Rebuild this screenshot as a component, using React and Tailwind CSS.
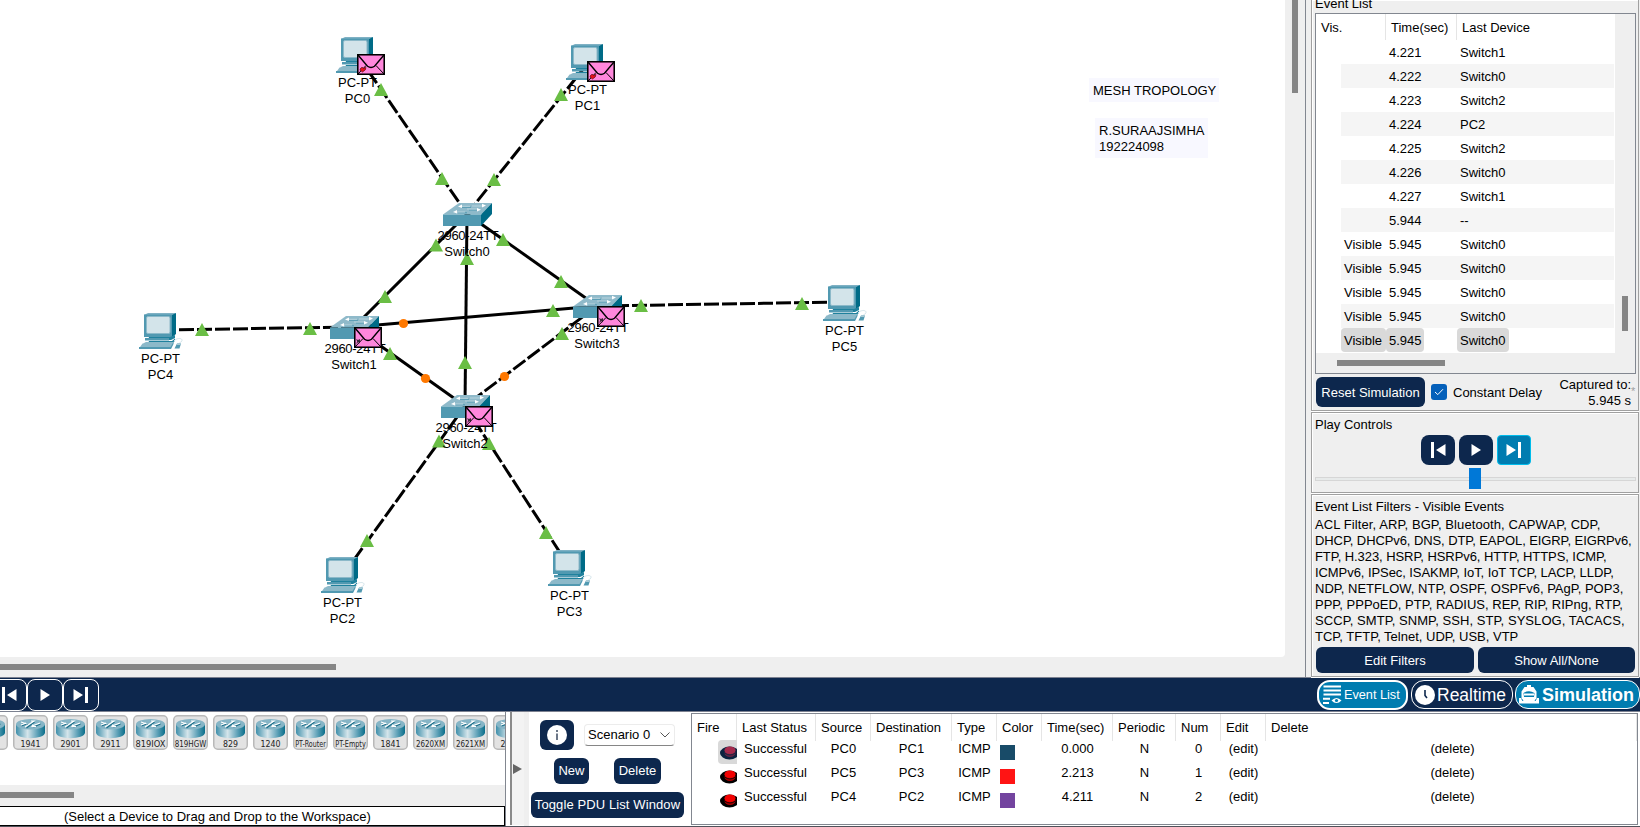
import React from "react";

const PCS = [
  { name: "PC0", x: 336, y: 37 },
  { name: "PC1", x: 566, y: 44 },
  { name: "PC4", x: 139, y: 313 },
  { name: "PC5", x: 823, y: 285 },
  { name: "PC2", x: 321, y: 557 },
  { name: "PC3", x: 548, y: 550 },
];

const SWITCHES = [
  { name: "Switch0", x: 443, y: 203 },
  { name: "Switch1", x: 330, y: 316 },
  { name: "Switch3", x: 573, y: 295 },
  { name: "Switch2", x: 441, y: 395 },
];

const LINKS = [
  [358, 56, 467, 214, true],
  [588, 63, 467, 214, true],
  [161, 330, 354, 327, true],
  [845, 302, 597, 306, true],
  [343, 575, 465, 406, true],
  [570, 568, 465, 406, true],
  [597, 306, 465, 406, true],
  [467, 214, 354, 327, false],
  [467, 214, 597, 306, false],
  [467, 214, 465, 406, false],
  [354, 327, 597, 306, false],
  [354, 327, 465, 406, false],
];

const UP = [
  [381, 89.5], [442, 178.5], [561, 94.5], [494, 179.5], [436, 245], [467, 258.5], [503, 239.5],
  [385, 296.5], [561, 281.5], [553, 310.5], [562, 333.5], [202, 329.5], [310, 328.5], [390, 353.5],
  [465, 362.5], [439, 441], [489, 443.5], [367, 540.5], [546, 532.5], [641, 305.5], [802, 303.5],
];

const WAIT = [[403.5, 323.5], [425.5, 378.5], [504.5, 376.5]];

const MAILS = [
  [357, 54, true], [587, 61, true], [354, 327, false], [597, 306, false], [465, 406, false],
];

function PcIcon() {
  return (
    <svg width="46" height="37" viewBox="0 0 46 37">
      <path d="M5 2 L9 0 H37 L34 3 Z" fill="#7fb1c4" />
      <path d="M33 2 L37 0 V21 L32 25 Z" fill="#006b87" />
      <rect x="5" y="1.5" width="28" height="22.5" fill="#5199b1" />
      <rect x="7.5" y="3.5" width="23.5" height="17" rx="1.5" fill="#d3e4ea" stroke="#8cb9c9" strokeWidth="1" />
      <path d="M10 24 H31 L36 22 V25 L32 27 H9 Z" fill="#1f819d" />
      <path d="M6 25 H30 V27.5 H6 Z" fill="#5199b1" />
      <path d="M10 28 H33 L36 25.5 V28 L32 30.5 H9 Z" fill="#1f819d" />
      <path d="M4 30.5 L7 29 H35 L32 35.5 H0 L3.5 30.5 Z" fill="#8cb9c9" />
      <path d="M0 34 H31.5 L34.5 29 V31 L32 36 H0 Z" fill="#5199b1" />
      <path d="M35 28 C38 24.5 43.5 25 43 27.5 C42.5 30 40 29 40 31" fill="none" stroke="#d3e4ea" strokeWidth="1" />
      <path d="M35.5 35.5 L38 30.5 H42 L40.5 35.5 Z" fill="#5199b1" />
      <path d="M37.5 32 L38.5 30.5 H42 L41.5 32 Z" fill="#a9cad6" />
    </svg>
  );
}

function SwitchIcon() {
  return (
    <svg width="50" height="24" viewBox="0 0 50 24">
      <path d="M0 11.5 L16 0 H49 L38 11.5 Z" fill="#8fbaca" />
      <path d="M38 11.5 L49 0 V11 L38 23 Z" fill="#006b87" />
      <rect x="0" y="11.5" width="38" height="11.5" fill="#5199b1" />
      <g fill="none" strokeWidth="1">
        <path d="M18 4.3 H28 M26 7 H36 M15 9.8 H24" stroke="#5199b1" />
        <path d="M17 3.3 H27 M29 3 H41 M24 6 H34 M12 9 H22" stroke="#b9d4de" />
      </g>
      <path d="M15 3.5 L19 1.5 V5 Z M43 2.5 L39 0.8 V4.4 Z M38 6.8 L34 5 V8.4 Z M10 9 L14 7 V10.5 Z" fill="#fff" />
    </svg>
  );
}

function Mail({ failed }) {
  return (
    <svg width="28" height="21" viewBox="0 0 28 21">
      <rect x="0.75" y="0.75" width="26.5" height="19.5" fill="#ff87dc" stroke="#000" strokeWidth="1.6" />
      <path d="M1 1 L10.5 12.2 Q14 14.8 17.5 12.2 L27 1" fill="none" stroke="#000" strokeWidth="1.4" />
      <path d="M1 20 L9 11.5 M27 20 L19 11.5" fill="none" stroke="#000" strokeWidth="1" />
      {failed ? (
        <path d="M3 15 L5 13.2 L6.5 14.2 L9 13.5 L8.2 16 L5.5 18 L3.5 16.5 Z" fill="#e8101c" stroke="#400" strokeWidth="0.6" />
      ) : (
        <path d="M2 12 L4 13 L6 12 V16.5 L4.5 15 L2 17 L3.2 14.5 Z" fill="#1a1a1a" opacity="0.85" />
      )}
    </svg>
  );
}

function Workspace() {
  return (
    <div className="relative h-[657px] w-[1285px] overflow-hidden rounded-br-sm bg-white">
      <svg className="absolute inset-0" width="1285" height="657">
        {LINKS.map(([x1, y1, x2, y2, dashed], i) => (
          <line key={i} x1={x1} y1={y1} x2={x2} y2={y2} stroke="#000" strokeWidth="3" strokeDasharray={dashed ? "15 3" : undefined} />
        ))}
        {UP.map(([x, y], i) => (
          <path key={i} d={`M${x} ${y - 6.5} L${x + 7} ${y + 6.5} H${x - 7} Z`} fill="#6abe45" />
        ))}
        {WAIT.map(([x, y], i) => (
          <circle key={i} cx={x} cy={y} r="4.6" fill="#ff7800" />
        ))}
      </svg>
      {PCS.map((d) => (
        <div key={d.name} className="absolute" style={{ left: d.x, top: d.y }}>
          <PcIcon />
          <div className="mt-px w-[43px] text-center">PC-PT<br />{d.name}</div>
        </div>
      ))}
      {SWITCHES.map((d) => (
        <div key={d.name} className="absolute" style={{ left: d.x, top: d.y }}>
          <SwitchIcon />
          <div className="-ml-2 mt-px w-[66px] text-center"><span className="tracking-[-0.3px]">2960-24TT</span></div>
          <div className="-ml-2 w-[64px] text-center">{d.name}</div>
        </div>
      ))}
      {MAILS.map(([x, y, failed], i) => (
        <div key={i} className="absolute" style={{ left: x, top: y }}>
          <Mail failed={failed} />
        </div>
      ))}
      <div className="absolute left-[1089px] top-[78px] h-6 w-[130px] whitespace-nowrap bg-[#f8f8ff] pl-1 pt-[5px]">MESH TROPOLOGY</div>
      <div className="absolute left-[1095px] top-[118px] h-10 w-[113px] bg-[#f8f8ff] pl-1 pt-[5px]">R.SURAAJSIMHA<br />192224098</div>
    </div>
  );
}

const EVENTS = [
  ["", "4.221", "Switch1"], ["", "4.222", "Switch0"], ["", "4.223", "Switch2"], ["", "4.224", "PC2"],
  ["", "4.225", "Switch2"], ["", "4.226", "Switch0"], ["", "4.227", "Switch1"], ["", "5.944", "--"],
  ["Visible", "5.945", "Switch0"], ["Visible", "5.945", "Switch0"], ["Visible", "5.945", "Switch0"],
  ["Visible", "5.945", "Switch0"], ["Visible", "5.945", "Switch0"],
];

function EventRow({ row, index }) {
  const selected = index === EVENTS.length - 1;
  const chip = selected ? "bg-[#d9d9d9]" : "";
  return (
    <div className={`ml-[25px] flex h-6 w-[273px] leading-[26px] ${index % 2 ? "bg-[#f5f5f5]" : "bg-white"}`}>
      <div className="w-[45px]"><div className={`h-6 rounded-sm pl-[3px] ${chip}`}>{row[0]}</div></div>
      <div className="w-[71px]"><div className={`h-6 w-[38px] rounded-sm pl-[3px] ${chip}`}>{row[1]}</div></div>
      <div className={`h-6 w-[52px] rounded-sm pl-[3px] ${chip}`}>{row[2]}</div>
    </div>
  );
}

const group = "border border-[#a0a0a0] shadow-[inset_1px_1px_0_#fff,0_1px_0_#fff]";

function StepGlyph({ kind }) {
  return (
    <svg width="20" height="20" viewBox="0 0 20 20" fill="#fff">
      {kind === "back" && <path d="M3 2 H6 V18 H3 Z M17.5 4 V16 L8 10 Z" />}
      {kind === "play" && <path d="M5.5 4 V16 L15 10 Z" />}
      {kind === "next" && <path d="M14 2 H17 V18 H14 Z M2.5 4 V16 L12 10 Z" />}
    </svg>
  );
}

function SidePanel() {
  return (
    <aside className="flex h-[677px] w-[335px] flex-col border-l border-[#828790] pl-[5px]">
      <section className={`h-[411px] w-[328px] overflow-hidden border-t-0 pl-[3px] ${group}`}>
        <div className="-mt-1 h-4">Event List</div>
        <div className="mt-px h-[361px] w-[321px] border border-[#828790]">
          <div className="flex">
            <div className="h-[339px] w-[299px] bg-white">
              <div className="flex h-[26px] leading-[28px]">
                <div className="w-[70px] border-r border-[#e5e5e5] pl-[5px]">Vis.</div>
                <div className="w-[71px] border-r border-[#e5e5e5] pl-[5px]">Time(sec)</div>
                <div className="pl-[5px]">Last Device</div>
              </div>
              {EVENTS.map((row, i) => <EventRow key={i} row={row} index={i} />)}
            </div>
            <div className="w-5 pl-[7px] pt-[282px]"><div className="h-[35px] w-1.5 bg-[#868686]" /></div>
          </div>
          <div className="pl-[21px] pt-[7px]"><div className="h-1.5 w-[108px] bg-[#868686]" /></div>
        </div>
        <div className="flex h-9 items-start pt-[3px]">
          <button className="ml-px h-[30px] w-[109px] rounded-md bg-[#0d274d] pt-px text-white">Reset Simulation</button>
          <div className="ml-1.5 mt-[7px] flex h-4 w-4 items-center justify-center rounded-[3px] bg-[#0560ba]">
            <svg width="10" height="8" viewBox="0 0 10 8"><path d="M1 4 L3.8 6.6 L9 1.2" fill="none" stroke="#fff" strokeWidth="1" /></svg>
          </div>
          <div className="ml-1.5 mt-2 w-24">Constant Delay</div>
          <div className="w-[82px] text-right">Captured to:<br />5.945 s</div>
          <div className="mt-1.5 text-[11px] text-[#a0a0a0]">*</div>
        </div>
      </section>

      <section className={`mt-px h-[81px] w-[328px] pl-[3px] ${group}`}>
        <div className="mt-1 h-4">Play Controls</div>
        <div className="ml-[106px] mt-0.5 flex gap-1">
          <button className="flex h-[30px] w-[34px] items-center justify-center rounded-lg bg-[#0d274d]"><StepGlyph kind="back" /></button>
          <button className="flex h-[30px] w-[34px] items-center justify-center rounded-lg bg-[#0d274d]"><StepGlyph kind="play" /></button>
          <button className="flex h-[30px] w-[34px] items-center justify-center rounded-sm border border-[#00bceb] bg-[#007cb0]"><StepGlyph kind="next" /></button>
        </div>
        <div className="mt-[3px] flex h-[21px] w-[321px] items-center">
          <div className="h-1 w-[154px] border border-r-0 border-[#d6d6d6] bg-[#e7eaea]" />
          <div className="h-[21px] w-3 bg-[#0078d7]" />
          <div className="h-1 flex-1 border border-l-0 border-[#d6d6d6] bg-[#e7eaea]" />
        </div>
      </section>

      <section className={`mt-px h-[183px] w-[328px] pl-[3px] ${group}`}>
        <div className="mt-1 h-4">Event List Filters - Visible Events</div>
        <div className="mt-0.5 whitespace-nowrap">
          <div className="tracking-[0.09px]">ACL Filter, ARP, BGP, Bluetooth, CAPWAP, CDP,</div>
          <div className="tracking-[-0.09px]">DHCP, DHCPv6, DNS, DTP, EAPOL, EIGRP, EIGRPv6,</div>
          <div className="tracking-[-0.07px]">FTP, H.323, HSRP, HSRPv6, HTTP, HTTPS, ICMP,</div>
          <div className="tracking-[-0.07px]">ICMPv6, IPSec, ISAKMP, IoT, IoT TCP, LACP, LLDP,</div>
          <div>NDP, NETFLOW, NTP, OSPF, OSPFv6, PAgP, POP3,</div>
          <div>PPP, PPPoED, PTP, RADIUS, REP, RIP, RIPng, RTP,</div>
          <div className="tracking-[0.06px]">SCCP, SMTP, SNMP, SSH, STP, SYSLOG, TACACS,</div>
          <div>TCP, TFTP, Telnet, UDP, USB, VTP</div>
        </div>
        <div className="ml-px mt-0.5 flex gap-1">
          <button className="h-[26px] w-[158px] rounded-md bg-[#0d274d] pt-px text-white">Edit Filters</button>
          <button className="h-[26px] w-[157px] rounded-md bg-[#0d274d] pt-px text-white">Show All/None</button>
        </div>
      </section>
    </aside>
  );
}

function ModeBar() {
  const step = "flex h-8 w-9 items-center justify-center rounded-lg border border-white";
  return (
    <div className="flex h-[35px] items-center overflow-hidden border-y border-[#7c8190] bg-[#0d274d] text-white">
      <div className="-ml-[9px] flex flex-1">
        <button className={step}><StepGlyph kind="back" /></button>
        <button className={step}><StepGlyph kind="play" /></button>
        <button className={step}><StepGlyph kind="next" /></button>
      </div>
      <button className="flex h-[30px] w-[91px] items-center rounded-[13px] border-2 border-white bg-[#007cb0] pl-[3px] text-[12.7px]">
        <svg width="21" height="20" viewBox="0 0 21 20" fill="none" stroke="#fff" strokeWidth="2">
          <path d="M1.5 1.5 H19 M1.5 5.5 H19 M1.5 9.5 H19 M1 13.8 H8 M1 18 H7" />
          <path d="M9.5 15.5 Q14.5 10.5 19.5 15.5 Q14.5 20.5 9.5 15.5 Z" fill="#fff" stroke="none" />
          <circle cx="14.5" cy="15.5" r="1.6" fill="#007cb0" stroke="none" />
        </svg>
        <span className="ml-px whitespace-nowrap">Event List</span>
      </button>
      <button className="ml-[3px] flex h-[29px] w-[102px] items-center rounded-[13px] border border-white pl-[3px] text-[17.5px]">
        <svg width="20" height="20" viewBox="0 0 20 20">
          <circle cx="10" cy="10" r="10" fill="#fff" />
          <path d="M10 5 V10.5 L12 13" fill="none" stroke="#0d274d" strokeWidth="1.6" />
        </svg>
        <span className="ml-0.5">Realtime</span>
      </button>
      <button className="ml-0.5 flex h-[29px] w-[125px] items-center rounded-[13px] border border-white bg-[#007cb0] pl-[3px] text-[18px] font-bold">
        <svg width="20" height="20" viewBox="0 0 20 20" fill="#fff">
          <path d="M8 0 H12 V2 H14.5 L17.5 6.5 V13 H20 V18.5 H0 V13 H2.5 V6.5 L5.5 2 H8 Z" />
          <path d="M4.5 8 Q10 4.5 15.5 8 L15 12 H5 Z" fill="#007cb0" />
          <path d="M2.5 13.5 L4 16 M17.5 13.5 L16 16" stroke="#007cb0" strokeWidth="1" />
          <rect x="5" y="8.5" width="10" height="2" />
        </svg>
        <span className="ml-[3px]">Simulation</span>
      </button>
    </div>
  );
}

const ROUTERS = [
  ["", 10], ["1941", 20], ["2901", 20], ["2911", 20], ["819IOX", 30], ["819HGW", 31.5], ["829", 15], ["1240", 20],
  ["PT-Router", 30.5], ["PT-Empty", 30.5], ["1841", 20], ["2620XM", 29], ["2621XM", 29], ["2811", 20],
];

function RouterTile({ label, width }) {
  return (
    <svg className="shrink-0 overflow-visible" width="35" height="35" viewBox="0 0 35 35">
      <rect x="0.75" y="0.75" width="33.5" height="33.5" rx="4" fill="#e3e3e3" stroke="#b9b9b9" strokeWidth="1.5" />
      <path d="M3 9 V17.5 C3 25 32 25 32 17.5 V9 Z" fill="url(#cylinder)" />
      <ellipse cx="17.5" cy="9.3" rx="14.5" ry="5.3" fill="#86b5c6" />
      <g fill="none" stroke="#1c6f89" strokeWidth="1.2" transform="translate(0.5 1)">
        <path d="M9 7 L15 9 M13 12 L21 6 M20 11 L27 8 M8 10 L13 8" />
      </g>
      <g fill="none" stroke="#fff" strokeWidth="1.1">
        <path d="M8 7 L14 9 M12 12 L21 6 H18 M19 11 L27 8 M8 10 L13 8 M20 9.5 L19 11.5 H23" />
      </g>
      <text x="17.5" y="31.7" textAnchor="middle" fontFamily="DejaVu Sans, sans-serif" fontSize="8" textLength={width} lengthAdjust="spacingAndGlyphs" fill="#222">{label}</text>
    </svg>
  );
}

function DevicePanel() {
  return (
    <div className="flex h-[114px] w-[506px] flex-col border-r border-[#828790]">
      <svg width="0" height="0" className="absolute">
        <defs>
          <linearGradient id="cylinder">
            <stop offset="0" stopColor="#3f8faa" />
            <stop offset="0.4" stopColor="#d5e5eb" />
            <stop offset="0.75" stopColor="#5a9fb6" />
            <stop offset="1" stopColor="#0a6e8a" />
          </linearGradient>
        </defs>
      </svg>
      <div className="flex h-[73px] overflow-hidden bg-white pt-[3px]">
        <div className="-ml-[27px] flex gap-[5px]">
          {ROUTERS.map(([label, w], i) => <RouterTile key={i} label={label} width={w} />)}
        </div>
      </div>
      <div className="h-[21px] bg-[#efefef] pt-[7px]"><div className="h-1.5 w-[74px] bg-[#868686]" /></div>
      <div className="h-5 border-y border-r border-black bg-white pl-16 pt-0.5">(Select a Device to Drag and Drop to the Workspace)</div>
    </div>
  );
}

function ScenarioPanel() {
  const button = "h-[26px] rounded-md bg-[#0d274d] text-white";
  return (
    <div className="flex h-[113px] w-[162px] flex-col bg-white pl-0.5">
      <div className="flex pt-2">
        <button className="ml-[9px] flex h-[30px] w-[34px] items-center justify-center rounded-md bg-[#0d274d]">
          <svg width="20" height="20" viewBox="0 0 20 20">
            <circle cx="10" cy="10" r="10" fill="#fff" />
            <rect x="9" y="8.5" width="2" height="6.5" fill="#6b7687" />
            <rect x="9" y="5" width="2" height="2" fill="#6b7687" />
          </svg>
        </button>
        <div className="ml-2.5 mt-1 flex h-[22px] w-[91px] items-center rounded-sm border border-b-[#868686] border-[#ececec] pl-[3px]">
          Scenario 0
          <svg className="ml-2.5" width="10" height="6" viewBox="0 0 10 6"><path d="M0.5 0.5 L5 5 L9.5 0.5" fill="none" stroke="#555" /></svg>
        </div>
      </div>
      <div className="mt-2 flex">
        <button className={`ml-[23px] w-[35px] ${button}`}>New</button>
        <button className={`ml-[25px] w-[47px] ${button}`}>Delete</button>
      </div>
      <button className={`mt-2 w-[153px] whitespace-nowrap tracking-[0.1px] ${button}`}>Toggle PDU List Window</button>
    </div>
  );
}

const PDUS = [
  ["PC0", "PC1", "bg-[#184b68]", "0.000", "0"],
  ["PC5", "PC3", "bg-[#ff1414]", "2.213", "1"],
  ["PC4", "PC2", "bg-[#73449f]", "4.211", "2"],
];

const HEADERS = ["Fire", "Last Status", "Source", "Destination", "Type", "Color", "Time(sec)", "Periodic", "Num", "Edit", "Delete"];
const columns = "grid grid-cols-[45px_79px_55px_81px_45px_45px_71px_63px_45px_45px_1fr]";

function FireButton({ selected }) {
  return (
    <div className={`ml-[26px] h-6 w-[19px] rounded-l-sm pl-0.5 pt-[5px] ${selected ? "bg-[#d9d9d9]" : ""}`}>
      <svg width="17" height="15" viewBox="0 0 17 15">
        <ellipse cx="9.5" cy="8" rx="9.5" ry="6.5" fill={selected ? "#0b2340" : "#000"} />
        <ellipse cx="10" cy="8" rx="5.5" ry="4" fill={selected ? "#642343" : "#a80000"} />
        <ellipse cx="10" cy="5.3" rx="5.5" ry="3.8" fill={selected ? "#a52a4c" : "#f20000"} />
        <path d="M4.5 8 Q10 12 15.5 8" fill="none" stroke={selected ? "#0b2340" : "#000"} strokeWidth="0.8" />
      </svg>
    </div>
  );
}

function PduTable() {
  return (
    <div className="mt-px h-[112px] w-[947px] border border-[#828790] bg-white">
      <div className={`${columns} h-[26px] leading-[27px]`}>
        {HEADERS.map((h) => <div key={h} className="border-r border-[#e5e5e5] pl-[5px]">{h}</div>)}
      </div>
      {PDUS.map(([src, dst, color, time, num], i) => (
        <div key={num} className={`${columns} h-6 text-center`}>
          <FireButton selected={i === 0} />
          <div className="pr-0.5 pt-px">Successful</div>
          <div className="pt-px">{src}</div>
          <div className="pt-px">{dst}</div>
          <div className="pt-px">ICMP</div>
          <div className="pl-[3px] pt-[5px]"><div className={`h-[15px] w-[15px] ${color}`} /></div>
          <div className="pt-px">{time}</div>
          <div className="pt-px">N</div>
          <div className="pt-px">{num}</div>
          <div className="pt-px">(edit)</div>
          <div className="pl-0.5 pt-px">(delete)</div>
        </div>
      ))}
    </div>
  );
}

export default function App() {
  return (
    <div className="h-[827px] w-[1640px] overflow-hidden bg-[#efefef] font-['Liberation_Sans',Arial,sans-serif] text-[13px] leading-4 text-black">
      <div className="flex h-[677px]">
        <div className="w-[1305px]">
          <div className="flex">
            <Workspace />
            <div className="pl-[7px]"><div className="h-[93px] w-1.5 bg-[#868686]" /></div>
          </div>
          <div className="pt-[7px]"><div className="h-1.5 w-[336px] bg-[#868686]" /></div>
        </div>
        <SidePanel />
      </div>
      <ModeBar />
      <div className="flex h-[115px] border-b border-[#50525a] bg-white">
        <DevicePanel />
        <div className="ml-1 flex h-[113px] w-[14px] items-center border-l-2 border-[#8a8a8a] bg-[#f3f3f3] pl-px">
          <svg width="9" height="10" viewBox="0 0 9 10"><path d="M0 0 L9 5 L0 10 Z" fill="#666" /></svg>
        </div>
        <div className="w-[5px] bg-[#efefef]" />
        <ScenarioPanel />
        <PduTable />
      </div>
    </div>
  );
}
